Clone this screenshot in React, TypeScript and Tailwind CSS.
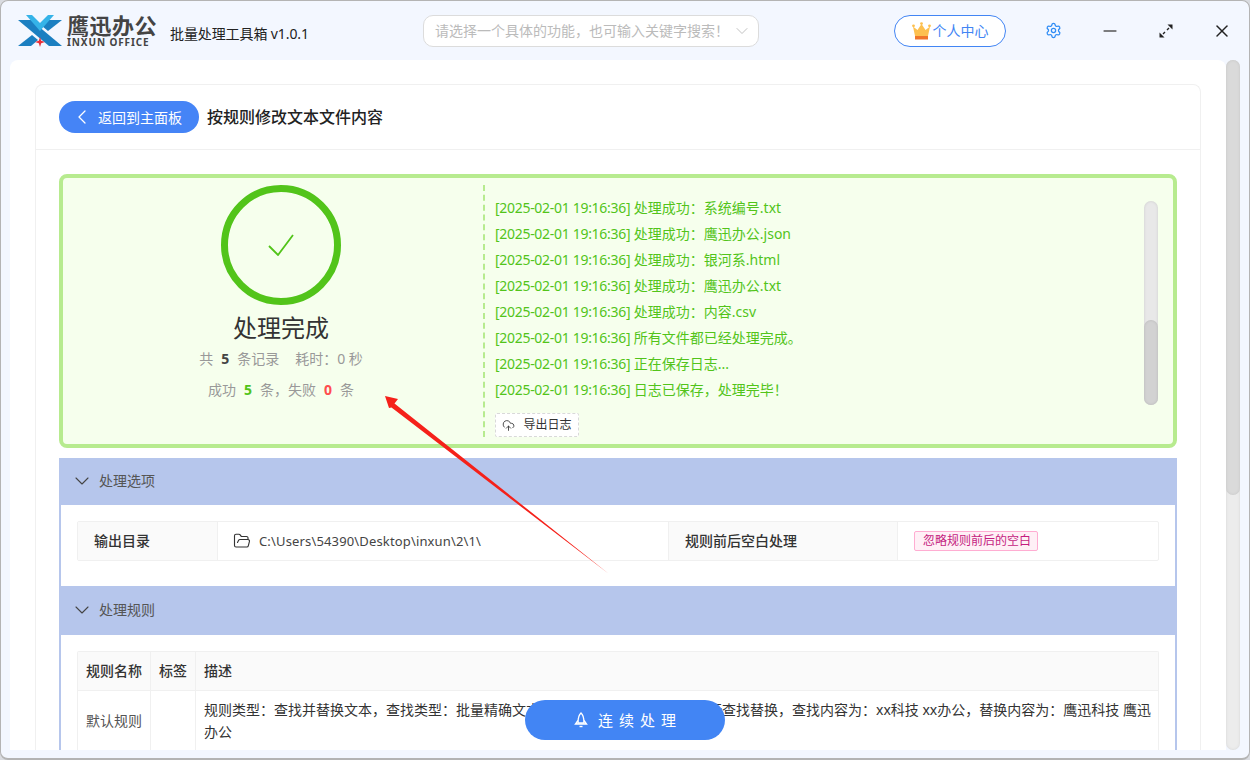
import React from 'react';
import { ChevronDown, ChevronLeft, CloudUpload, FolderOpen, Minus, Settings, X } from 'lucide-react';

const logs = [
  '处理成功：系统编号.txt',
  '处理成功：鹰迅办公.json',
  '处理成功：银河系.html',
  '处理成功：鹰迅办公.txt',
  '处理成功：内容.csv',
  '所有文件都已经处理完成。',
  '正在保存日志...',
  '日志已保存，处理完毕！',
];

const Logo = () => (
  <svg width="44" height="32" viewBox="0 0 44 32" className="shrink-0">
    <polygon points="0,5 13,5 44,31 31,31" fill="#1b7fc1" />
    <polygon points="0,31 13,31 20,25 14,20" fill="#1b7fc1" />
    <polygon points="44,5 31,5 24,11 30,16" fill="#1b7fc1" />
    <polygon points="8,0 14,0 22,8 30,0 36,0 22,16" fill="#35b3e8" />
    <polygon points="22,22 23.2,25.8 27,27 23.2,28.2 22,32 20.8,28.2 17,27 20.8,25.8" fill="#e8303a" />
  </svg>
);

const Crown = () => (
  <svg width="19" height="18" viewBox="0 0 19 18" className="shrink-0">
    <path d="M1 4.5 L5.5 8 L9.5 2 L13.5 8 L18 4.5 L16 14 H3 Z" fill="#fdc04f" />
    <rect x="3" y="14" width="13" height="3.5" fill="#f0752a" />
    <circle cx="1.5" cy="3.8" r="1.4" fill="#fdc04f" />
    <circle cx="9.5" cy="1.6" r="1.4" fill="#fdc04f" />
    <circle cx="17.5" cy="3.8" r="1.4" fill="#fdc04f" />
  </svg>
);

const SectionHeader = ({ title, className }: { title: string; className: string }) => (
  <div className={`flex items-center bg-[#b6c6ec] pb-[2px] pl-[11px] text-[14px] text-[#555] ${className}`}>
    <ChevronDown className="mr-[5px] h-[24px] w-[24px] text-[#444]" strokeWidth={1.1} />
    <span>{title}</span>
  </div>
);

export default function App() {
  return (
    <div className="relative h-[760px] w-[1250px] overflow-hidden bg-[#d9dbe0] font-['Noto_Sans','Noto_Sans_CJK_SC',sans-serif]">
      <div className="flex h-full w-full flex-col rounded-lg border-x border-t border-b-2 border-[#b4b4b4] bg-[#f3f7ff]">
        {/* Title bar */}
        <div className="flex h-[59px] shrink-0 items-center pl-[17px]">
          <Logo />
          <div className="ml-[5px] flex w-[92px] flex-col">
            <span className="text-[22px] leading-[22px] font-bold tracking-[0.5px] text-[#444]">鹰迅办公</span>
            <span className="mt-[1px] text-[10px] leading-[10px] font-bold tracking-[0.9px] text-[#444]">INXUN OFFICE</span>
          </div>
          <span className="mt-[5px] ml-[11px] w-[137px] text-[14px] tracking-[-0.1px] whitespace-nowrap text-[#222]">批量处理工具箱 v1.0.1</span>
          <div className="ml-[116px] flex h-[32px] w-[336px] items-center justify-between rounded-[10px] border border-[#dcdcdc] bg-white pr-[6px] pl-[11px] text-[14px] text-[#bbb]">
            <span>请选择一个具体的功能，也可输入关键字搜索！</span>
            <ChevronDown className="h-[20px] w-[20px]" strokeWidth={1.1} />
          </div>
          <div className="ml-[135px] flex h-[32px] w-[112px] items-center justify-center gap-[2px] rounded-full border border-[#4285f4] bg-white text-[14px] text-[#4285f4]">
            <Crown />
            <span>个人中心</span>
          </div>
          <Settings className="ml-[39px] h-[17px] w-[17px] text-[#2f8cf5]" strokeWidth={1.8} />
          <Minus className="ml-[38px] h-[20px] w-[20px] text-[#555]" strokeWidth={2} />
          <svg width="16" height="16" viewBox="0 0 16 16" className="ml-[38px] text-[#222]">
            <polygon points="14.5,1.5 14.5,6.5 9.5,1.5" fill="currentColor" />
            <polygon points="1.5,14.5 1.5,9.5 6.5,14.5" fill="currentColor" />
            <path d="M11 5 L9 7 M7 9 L5 11" fill="none" stroke="currentColor" strokeWidth="1.4" />
          </svg>
          <X className="ml-[38px] h-[20px] w-[20px] text-[#222]" strokeWidth={1.8} />
        </div>

        {/* Body */}
        <div className="flex min-h-0 flex-1 pr-[9px] pb-[8px] pl-[9px]">
          <div className="min-w-0 flex-1 overflow-hidden rounded-t-lg bg-white px-[25px] pt-[24px]">
            <div className="rounded-t-lg border border-b-0 border-[#f0f0f0]">
              <div className="flex h-[65px] items-center gap-[8px] border-b border-[#f0f0f0] px-[23px]">
                <button className="flex h-[32px] w-[140px] items-center rounded-full bg-[#4584f6] pl-[11px] text-[14px] text-white">
                  <ChevronLeft className="mr-[4px] h-[24px] w-[24px]" strokeWidth={1.3} />
                  返回到主面板
                </button>
                <span className="text-[16px] font-medium text-[#222]">按规则修改文本文件内容</span>
              </div>

              <div className="px-[23px] pt-[24px]">
                {/* Result */}
                <div className="flex h-[274px] rounded-lg border-4 border-[#b7eb8f] bg-[#f6ffed]">
                  <div className="flex w-[420px] shrink-0 flex-col items-center pt-[7px] pl-[16px]">
                    <div className="flex h-[120px] w-[120px] items-center justify-center rounded-full border-[7px] border-[#52c41a]">
                      <svg width="26" height="22" viewBox="0 0 26 22">
                        <path d="M1 12 L10 21 L25 1" fill="none" stroke="#52c41a" strokeWidth="1.8" />
                      </svg>
                    </div>
                    <div className="mt-[7px] text-[24px] leading-[32px] text-[#333]">处理完成</div>
                    <div className="mt-[4px] text-[14px] leading-[22px] whitespace-nowrap text-[#999]">
                      共<span className="mx-[8px] font-bold text-[#444]">5</span>条记录<span className="ml-[16px]">耗时：0 秒</span>
                    </div>
                    <div className="mt-[9px] text-[14px] leading-[22px] whitespace-nowrap text-[#999]">
                      成功<span className="mx-[8px] font-bold text-[#52c41a]">5</span>条，失败<span className="mx-[8px] font-bold text-[#ff4d4f]">0</span>条
                    </div>
                  </div>
                  <div className="my-[7px] flex flex-1 border-l-2 border-dashed border-[#b7eb8f] pl-[10px]">
                    <div className="flex-1 pt-[10px]">
                      {logs.map((line, i) => (
                        <div key={i} className="h-[26px] text-[14px] leading-[26px] text-[#52c41a]">
                          <span className="tracking-[-0.3px]">[2025-02-01 19:16:36]</span> {line}
                        </div>
                      ))}
                      <div className="mt-[10px] flex h-[24px] w-[84px] items-center justify-center gap-[8px] rounded-[2px] border border-dashed border-[#d9d9d9] bg-white text-[12px] text-[#333]">
                        <CloudUpload className="h-[13px] w-[13px]" strokeWidth={1.6} />
                        <span>导出日志</span>
                      </div>
                    </div>
                    <div className="mt-[16px] mr-[15px] flex h-[204px] w-[14px] flex-col rounded-full bg-[#e8e8e8] shadow-[inset_0_0_3px_rgba(0,0,0,0.12)]">
                      <div className="mt-auto h-[85px] rounded-full bg-[#d2d2d2] shadow-[inset_0_0_3px_rgba(0,0,0,0.12)]" />
                    </div>
                  </div>
                </div>

                {/* Options */}
                <SectionHeader title="处理选项" className="mt-[10px] h-[47px]" />
                <div className="border-x-2 border-[#b6c6ec] px-[16px] pt-[16px] pb-[25px]">
                  <div className="flex h-[40px] rounded-[2px] border border-[#f0f0f0] text-[14px] text-[#333]">
                    <div className="flex w-[140px] items-center border-r border-[#f0f0f0] bg-[#fafafa] pb-[1px] pl-[16px] font-medium">输出目录</div>
                    <div className="flex w-[451px] items-center border-r border-[#f0f0f0] pl-[15px] text-[13px] tracking-[0.15px] text-[#444]">
                      <FolderOpen className="mr-[8px] h-[18px] w-[18px] text-[#333]" strokeWidth={1.5} />
                      <span className="pt-[1px]">C:\Users\54390\Desktop\inxun\2\1\</span>
                    </div>
                    <div className="flex w-[229px] items-center border-r border-[#f0f0f0] bg-[#fafafa] pb-[1px] pl-[16px] font-medium">规则前后空白处理</div>
                    <div className="flex flex-1 items-center pl-[16px]">
                      <span className="rounded-[2px] border border-[#ffadd2] bg-[#fff0f6] pr-[6px] pl-[8px] text-[12px] leading-[18px] text-[#c41d7f]">忽略规则前后的空白</span>
                    </div>
                  </div>
                </div>

                {/* Rules */}
                <SectionHeader title="处理规则" className="h-[49px]" />
                <div className="border-x-2 border-[#b6c6ec] px-[16px] pt-[16px]">
                  <div className="grid grid-cols-[73px_45px_1fr] rounded-t-[2px] border border-b-0 border-[#f0f0f0] text-[14px] text-[#333]">
                    <div className="flex h-[39px] items-center border-r border-b border-[#f0f0f0] bg-[#fafafa] pb-[1px] pl-[8px] font-medium whitespace-nowrap">规则名称</div>
                    <div className="flex h-[39px] items-center border-r border-b border-[#f0f0f0] bg-[#fafafa] pb-[1px] pl-[8px] font-medium">标签</div>
                    <div className="flex h-[39px] items-center border-b border-[#f0f0f0] bg-[#fafafa] pb-[1px] pl-[8px] font-medium">描述</div>
                    <div className="flex items-center border-r border-[#f0f0f0] pb-[2px] pl-[8px] whitespace-nowrap text-[#555]">默认规则</div>
                    <div className="border-r border-[#f0f0f0]" />
                    <div className="py-[8px] pr-[4px] pl-[8px] leading-[22px]">
                      规则类型：查找并替换文本，查找类型：批量精确文本替换，查找范围：全文件进行查找替换，查找内容为：xx科技 xx办公，替换内容为：鹰迅科技 鹰迅办公
                    </div>
                  </div>
                </div>
              </div>
            </div>
          </div>

          {/* Page scrollbar */}
          <div className="flex w-[14px] shrink-0 flex-col rounded-full bg-[#ececec] shadow-[inset_0_0_3px_rgba(0,0,0,0.1)]">
            <div className="h-[435px] rounded-full bg-[#dadada] shadow-[inset_0_0_3px_rgba(0,0,0,0.1)]" />
          </div>
        </div>
      </div>

      {/* Floating action */}
      <button className="absolute top-[700px] left-[525px] flex h-[40px] w-[200px] items-center justify-center gap-[10px] rounded-full bg-[#4285f4] pl-[6px] text-[15px] tracking-[6px] text-white">
        <svg width="14" height="16" viewBox="0 0 14 16" fill="none" stroke="currentColor" strokeWidth="1.4">
          <path d="M7 1 C9.5 3 10 6 10 11 H4 C4 6 4.5 3 7 1 Z" />
          <path d="M4 8.5 L1.5 12 H12.5 L10 8.5" />
          <path d="M5.5 14.5 H8.5" />
        </svg>
        <span>连续处理</span>
      </button>

      {/* Annotation arrow */}
      <svg width="1250" height="760" viewBox="0 0 1250 760" className="pointer-events-none absolute top-0 left-0">
        <polygon points="385,396 398,399 394.5,403.5 609,574 391.5,407.5 389,408" fill="#f5211a" />
      </svg>
    </div>
  );
}
